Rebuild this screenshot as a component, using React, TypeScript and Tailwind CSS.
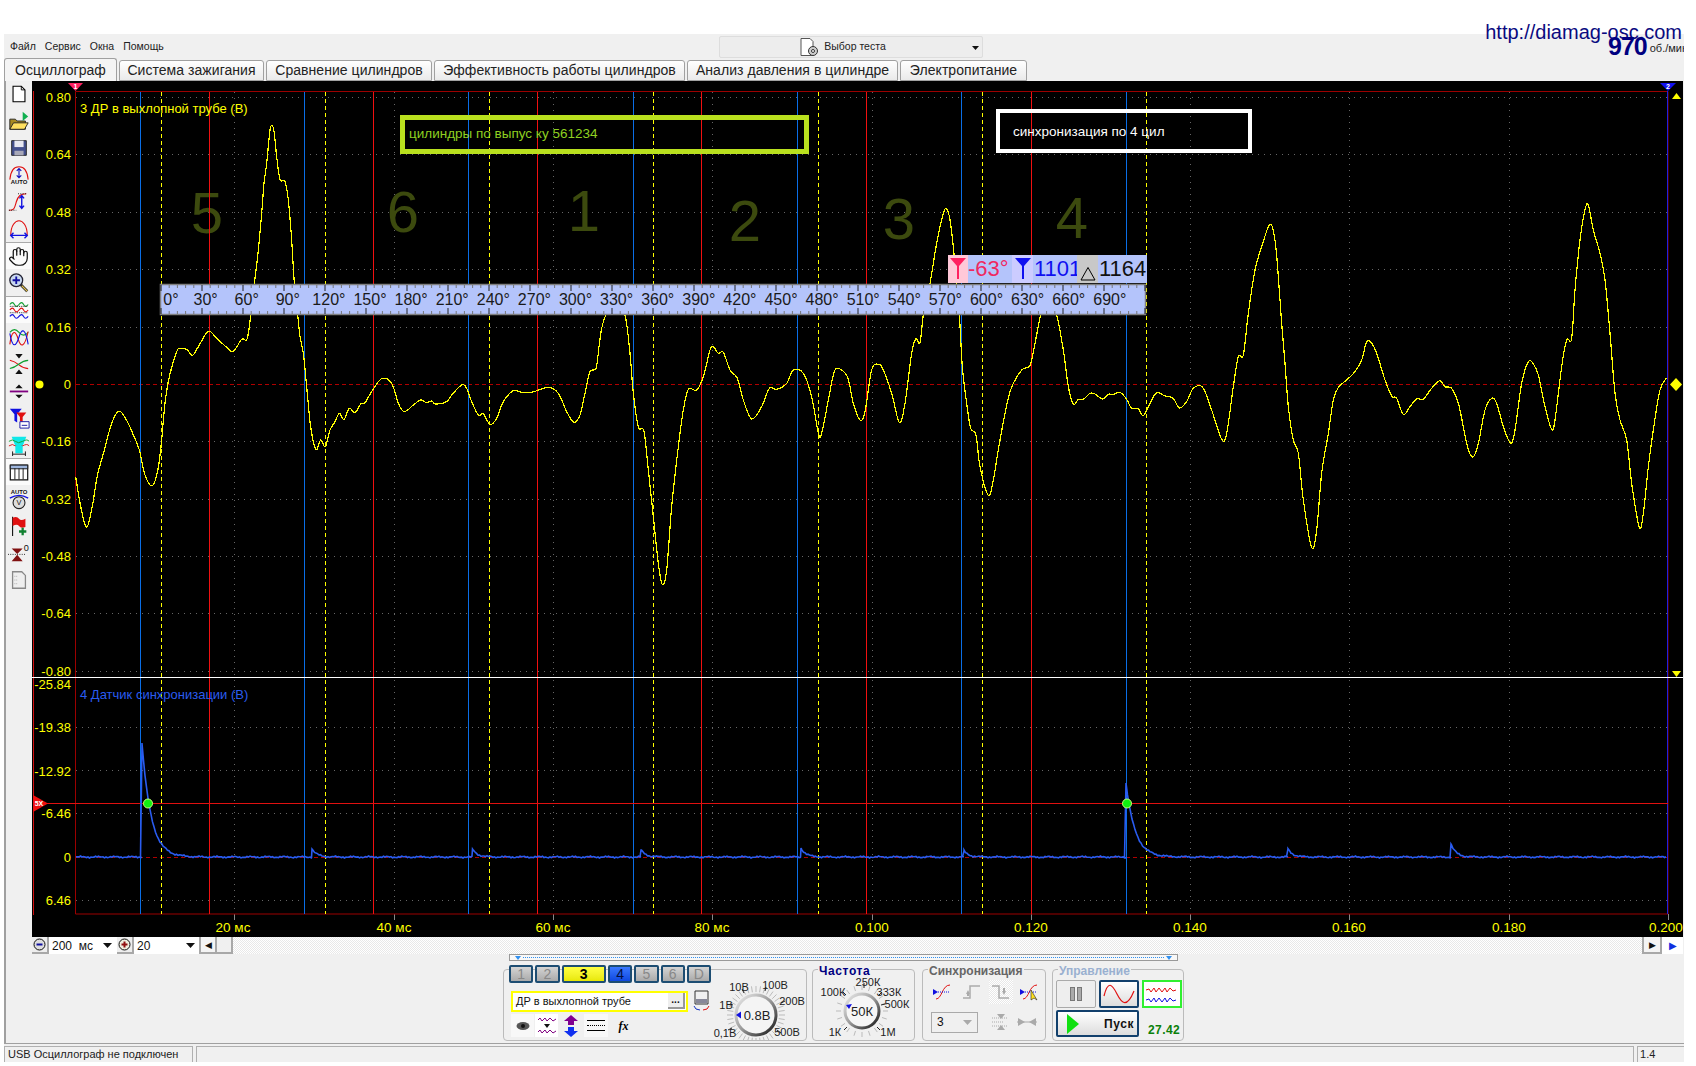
import React from "react";
import { Hand } from "lucide-react";

type Pt = [number, number];

// traced from the reference, each block in its own crop coordinates (3x)
const zoomed = (ox: number, oy: number, pts: Pt[]): Pt[] =>
  pts.map(([x, y]) => [ox + x / 3, oy + y / 3] as Pt);

const yellowTrace: Pt[] = [
  [75.7, 477], [81, 508], [86.5, 527], [92, 508], [97.3, 476],
  ...zoomed(70, 110, [
    [103, 1020], [125, 940], [147, 903], [172, 935], [190, 975], [208, 1020],
  ]),
  [145, 475], [152, 486], [157, 474],
  ...zoomed(70, 110, [
    [272, 1020], [285, 880], [298, 800], [320, 725], [330, 716], [350, 718], [367, 736], [385, 710], [415, 664],
    [440, 685], [470, 712], [490, 724], [515, 688], [530, 690], [538, 650], [542, 614], [553, 522], [565, 420],
    [575, 310], [582, 220], [590, 160], [600, 60], [607, 48], [613, 70], [620, 140], [630, 208], [645, 215],
    [655, 270], [665, 390], [673, 520], [683, 614], [690, 680], [700, 730], [710, 830], [722, 950], [738, 1018],
    [752, 990], [766, 1010], [780, 960], [795, 935], [808, 910], [822, 928], [838, 895], [855, 908], [872, 882],
    [885, 878], [905, 845], [935, 806], [965, 820], [985, 880], [1003, 905], [1030, 885], [1052, 870], [1070, 878],
    [1085, 873], [1097, 882], [1130, 875], [1145, 855], [1175, 825], [1190, 835], [1205, 875], [1225, 915], [1240, 912],
  ]),
  ...zoomed(490, 230, [
    [0, 583], [20, 565], [40, 515], [70, 482], [95, 487], [125, 487], [175, 472], [205, 490], [230, 545], [252, 577],
    [270, 555], [285, 490], [300, 425], [318, 415], [327, 350], [335, 295], [347, 255], [375, 190], [405, 255], [420, 370],
    [430, 490], [445, 590], [462, 605], [475, 720], [490, 860], [505, 1000], [517, 1063], [530, 1020], [545, 830], [565, 650],
    [580, 540], [595, 478], [620, 480], [640, 440], [660, 360], [670, 350], [685, 370], [700, 367], [720, 420], [742, 445],
    [760, 510], [785, 567], [815, 530], [838, 475], [860, 478], [890, 460], [910, 420], [940, 430], [965, 500], [985, 610],
    [995, 610], [1015, 510], [1030, 435], [1043, 415], [1072, 440], [1090, 520], [1110, 570], [1125, 545], [1145, 420],
    [1165, 403], [1180, 420], [1205, 490], [1228, 577],
  ]),
  ...zoomed(900, 190, [
    [15, 640], [35, 490], [47, 447], [60, 457], [70, 375], [90, 280], [110, 160], [130, 70], [140, 58], [150, 90],
    [165, 220], [178, 375], [187, 530], [200, 640], [212, 715], [228, 735], [240, 830], [265, 916], [280, 870], [300, 750],
    [330, 605], [365, 540], [390, 527], [405, 460], [422, 375], [445, 300], [470, 375], [490, 480], [505, 590], [520, 642],
    [535, 628], [550, 628], [570, 610], [585, 612], [608, 627], [625, 613], [640, 613], [660, 607], [680, 628], [695, 655],
    [715, 657], [730, 677], [750, 640], [770, 608], [795, 618], [820, 625], [838, 654], [860, 635], [880, 595], [908, 592],
    [935, 660], [965, 748], [980, 730], [1000, 590], [1015, 500], [1030, 495], [1045, 370], [1065, 240], [1085, 170], [1110, 103],
  ]),
  ...zoomed(1270, 190, [
    [15, 150], [25, 260], [35, 400], [45, 520], [55, 650], [70, 750], [85, 790], [100, 930], [125, 1072], [140, 1020],
    [155, 850], [175, 730], [190, 630], [205, 592], [230, 570], [255, 545], [275, 510], [290, 455], [305, 460], [320, 490],
    [345, 570], [365, 618], [380, 625], [400, 673], [420, 650], [440, 627], [460, 627], [485, 595], [510, 572], [525, 590],
    [545, 595], [565, 640], [580, 710], [595, 780], [610, 800], [625, 760], [645, 660], [665, 625], [680, 640], [700, 710],
    [722, 760], [735, 720], [755, 580], [775, 515], [790, 522], [805, 555], [825, 650], [845, 718], [855, 690], [875, 530],
    [890, 450], [905, 445], [915, 300], [930, 150], [945, 60], [955, 45], [970, 120], [990, 190], [1005, 270], [1020, 430],
    [1035, 610], [1050, 690], [1070, 750], [1085, 880], [1108, 1012], [1120, 970], [1135, 830], [1150, 720], [1170, 600], [1190, 563],
  ]),
];

const smooth = (pts: Pt[]) => {
  let d = `M${pts[0][0]} ${pts[0][1]}`;
  for (let i = 0; i < pts.length - 1; i++) {
    const p0 = pts[Math.max(i - 1, 0)];
    const p1 = pts[i];
    const p2 = pts[i + 1];
    const p3 = pts[Math.min(i + 2, pts.length - 1)];
    d += `C${p1[0] + (p2[0] - p0[0]) / 6} ${p1[1] + (p2[1] - p0[1]) / 6} ${p2[0] - (p3[0] - p1[0]) / 6} ${p2[1] - (p3[1] - p1[1]) / 6} ${p2[0]} ${p2[1]}`;
  }
  return d;
};

// sync channel: flat line with a pulse at each spark
const pulses: [number, number][] = [
  [142, 114], [312, 8], [472.5, 8], [641, 7], [801, 9], [964, 6], [1126, 74], [1288, 8], [1451, 13],
];
const blueTrace = () => {
  const pts: Pt[] = [];
  for (let x = 76; x < 1667; x += 1.5) {
    const noise = Math.sin(x * 1.7) * 0.5 + Math.sin(x * 0.37) * 0.5;
    let lift = 0;
    for (const [px, h] of pulses) {
      if (x >= px) {
        const dx = x - px;
        lift = Math.max(lift, h * Math.exp(-dx / (h > 50 ? 9 : 5)));
      }
    }
    const before = pulses.find(([px]) => x < px && x + 1.5 >= px);
    if (before) pts.push([before[0], 857 + noise]);
    pts.push([x, 857 + noise - lift]);
    if (before) {
      pts.push([before[0], 857 - before[1]]);
    }
  }
  return "M" + pts.map((p) => `${p[0].toFixed(1)} ${p[1].toFixed(1)}`).join("L");
};

const blues = [140, 304, 468, 633, 797, 961, 1126];
const dashes = [161, 325, 489, 653, 818, 982, 1146];
const reds = [209, 373, 537, 701, 866, 1031];
const gridX = [234, 394, 553, 712, 872, 1031, 1190, 1349, 1509];
const gridY = [97, 154, 212, 269, 327, 441, 499, 556, 613, 671, 727, 770, 813, 900];
const yLabels: [string, number][] = [
  ["0.80", 97], ["0.64", 154], ["0.48", 212], ["0.32", 269], ["0.16", 327], ["0", 384], ["-0.16", 441], ["-0.32", 499],
  ["-0.48", 556], ["-0.64", 613], ["-0.80", 671], ["-25.84", 684], ["-19.38", 727], ["-12.92", 771], ["-6.46", 813],
  ["0", 857], ["6.46", 900],
];
const xLabels: [string, number][] = [
  ["20 мс", 233], ["40 мс", 394], ["60 мс", 553], ["80 мс", 712], ["0.100", 872], ["0.120", 1031], ["0.140", 1190],
  ["0.160", 1349], ["0.180", 1509], ["0.200", 1666],
];
const digits: [string, number, number][] = [
  ["5", 207, 233], ["6", 403, 232], ["1", 584, 231], ["2", 745, 241], ["3", 899, 239], ["4", 1072, 238],
];

const Chart = () => {
  const deg: number[] = [];
  for (let i = 0; i < 24; i++) deg.push(i * 30);
  const minor: number[] = [];
  for (let x = 161; x < 1146; x += 8.2) minor.push(x);
  return (
    <svg width={1651} height={856} viewBox="32 81 1651 856" className="block">
      <rect x={32} y={81} width={1651} height={856} fill="#000" />
      {gridY.map((y) => (
        <line key={y} x1={76} x2={1668} y1={y + 0.5} y2={y + 0.5} stroke="#666" strokeDasharray="1 5" />
      ))}
      {gridX.map((x) => (
        <g key={x}>
          <line x1={x + 0.5} x2={x + 0.5} y1={92} y2={914} stroke="#666" strokeDasharray="1 5" />
          <line x1={x + 0.5} x2={x + 0.5} y1={914} y2={920} stroke="#888" />
        </g>
      ))}
      <line x1={1668.5} x2={1668.5} y1={914} y2={920} stroke="#888" />
      {[384, 857].map((y) => (
        <line key={y} x1={76} x2={1668} y1={y + 0.5} y2={y + 0.5} stroke="#b00000" strokeDasharray="4 3" />
      ))}
      {digits.map(([t, x, y]) => (
        <text key={t} x={x} y={y} fontSize={58} textAnchor="middle" fill="#3c4a0e">
          {t}
        </text>
      ))}
      <path d="M75.5 914V91.5H1668V914H75.5Z" fill="none" stroke="#9c0000" />
      <line x1={33.5} x2={33.5} y1={91} y2={915} stroke="#d01010" />
      <line x1={1667.5} x2={1667.5} y1={91} y2={914} stroke="#2020e0" />
      {blues.map((x) => (
        <line key={x} x1={x + 0.5} x2={x + 0.5} y1={92} y2={914} stroke="#0a6ee6" />
      ))}
      {reds.map((x) => (
        <line key={x} x1={x + 0.5} x2={x + 0.5} y1={92} y2={914} stroke="#f01010" />
      ))}
      {dashes.map((x) => (
        <line key={x} x1={x + 0.5} x2={x + 0.5} y1={92} y2={914} stroke="#ffff00" strokeDasharray="4 3" />
      ))}
      <line x1={33} x2={1668} y1={803.5} y2={803.5} stroke="#e01010" />
      <path d={smooth(yellowTrace)} fill="none" stroke="#ffff00" strokeWidth={1.2} shapeRendering="crispEdges" />
      <path d={blueTrace()} fill="none" stroke="#2a5cf0" strokeWidth={1.6} />
      <line x1={32} x2={1683} y1={677.5} y2={677.5} stroke="#fff" />
      {yLabels.map(([t, y]) => (
        <text key={t + y} x={71} y={y + 5} fontSize={13} textAnchor="end" fill="#ffff00">
          {t}
        </text>
      ))}
      {xLabels.map(([t, x]) => (
        <text key={t} x={x} y={932} fontSize={13.5} textAnchor="middle" fill="#ffff00">
          {t}
        </text>
      ))}
      <text x={80} y={113} fontSize={13} fill="#ffff00">
        3 ДР в выхлопной трубе (В)
      </text>
      <text x={80} y={699} fontSize={13} fill="#2a5cf0">
        4 Датчик синхронизации (В)
      </text>
      <circle cx={39.5} cy={384.5} r={4} fill="#ffff00" />
      <path d="M1676 378l6 6.5-6 6.5-6-6.5z" fill="#ffff00" />
      <path d="M1672 99l4.500-6 4.500 6z" fill="#ffff00" />
      <path d="M1672 671l4.500 6 4.500-6z" fill="#ffff00" />
      <path d="M68 83h15l-7.500 8z" fill="#ff2060" />
      <text x={75.5} y={89} fontSize={7} fontWeight={700} textAnchor="middle" fill="#fff">
        1
      </text>
      <path d="M1660 83h16l-8 8z" fill="#1010f0" />
      <text x={1668} y={89} fontSize={7} fontWeight={700} textAnchor="middle" fill="#fff">
        2
      </text>
      <path d="M33 795l15 8.500-15 8.500z" fill="#f01010" />
      <text x={39} y={806} fontSize={7} fontWeight={700} textAnchor="middle" fill="#fff">
        5X
      </text>
      <circle cx={148} cy={803.500} r={4.500} fill="#10f010" stroke="#c8ff80" />
      <circle cx={1127} cy={803.500} r={4.500} fill="#10f010" stroke="#c8ff80" />

      {/* degree ruler */}
      <rect x={160.500} y={284.500} width={985} height={30} fill="#b4c4fb" stroke="#808080" strokeWidth={1.500} />
      {minor.map((x, i) => (
        <g key={x} stroke={i % 5 === 0 ? "#222" : "#777"}>
          <line x1={x} x2={x} y1={285} y2={i % 5 === 0 ? 291 : 288} />
          <line x1={x} x2={x} y1={i % 5 === 0 ? 308 : 311} y2={314} />
        </g>
      ))}
      {deg.map((d, i) => (
        <text key={d} x={i === 0 ? 171 : 164.5 + i * 41.1} y={305} fontSize={16} textAnchor="middle" fill="#1a1a1a">
          {d}°
        </text>
      ))}
    </svg>
  );
};

const Funnel = ({ color }: { color: string }) => (
  <svg width={18} height={26} viewBox="0 0 18 26">
    <path d="M1 2h16l-7 8v13H8V10z" fill={color} />
  </svg>
);

const Readout = () => (
  <div className="absolute left-[916px] top-[174px] flex h-[28px] w-[199px] items-center overflow-hidden whitespace-nowrap bg-[#b4c4fb] text-[22px] leading-[28px]">
    <div className="flex h-full w-[20px] items-center justify-center bg-[#ffc8d8]">
      <Funnel color="#ff2060" />
    </div>
    <div className="w-[44px] text-[#f02860]">-63°</div>
    <div className="flex h-full w-[21px] items-center justify-center bg-[#ccccff]">
      <Funnel color="#1010f0" />
    </div>
    <div className="w-[44px] overflow-hidden pl-[1px] text-[#1010f0]">1101</div>
    <div className="flex h-full w-[21px] items-end justify-center bg-[#c8c8c8] pb-[2px]">
      <svg width={16} height={15} viewBox="0 0 16 15">
        <path d="M8 1.500L1 14h14z" fill="none" stroke="#000" />
      </svg>
    </div>
    <div className="ml-[1px] text-[#111]">1164</div>
  </div>
);

const Icon = ({ children, size = 22 }: { children: React.ReactNode; size?: number }) => (
  <svg width={size} height={size} viewBox="0 0 24 24" fill="none">
    {children}
  </svg>
);

const Auto = ({ y }: { y: number }) => (
  <text x={12} y={y} fontSize={6.500} fontWeight={700} textAnchor="middle" fill="#111">
    AUTO
  </text>
);

const toolbar: { icon: React.ReactNode; on?: boolean }[] = [
  {
    icon: (
      <Icon>
        <path d="M5.500 3.500h9l4 4v13h-13z" fill="#fff" stroke="#000" strokeWidth={1.200} />
        <path d="M14.500 3.500v4h4" stroke="#000" />
      </Icon>
    ),
  },
  {
    icon: (
      <Icon>
        <path d="M2 21V10h6l2 2h9v9z" fill="#a88a20" stroke="#222" />
        <path d="M2 21l4-7h16l-4 7z" fill="#ffe060" stroke="#222" />
        <path d="M16 2l6 5-6 5z" fill="#10b050" />
      </Icon>
    ),
  },
  {
    icon: (
      <Icon>
        <path d="M4 4h16v16H4z" fill="#44508c" stroke="#222" />
        <path d="M7 4h10v7H7z" fill="#e8e8f0" />
        <path d="M7 15h10v5H7z" fill="#a8a8b8" />
      </Icon>
    ),
  },
  {
    icon: (
      <Icon>
        <path d="M2 17C3 6 8 3 12 3s9 3 10 14" stroke="#e01010" strokeWidth={1.200} />
        <path d="M12 5v10M9.500 7.500L12 5l2.500 2.500M9.500 12.500L12 15l2.500-2.500" stroke="#1010c0" strokeWidth={1.200} />
        <Auto y={22} />
      </Icon>
    ),
  },
  {
    icon: (
      <Icon>
        <path d="M1 21c6 0 6-2 8-9s5-9 11-9" stroke="#e01010" strokeWidth={1.200} />
        <path d="M1 21h8M11 3h10" stroke="#111" strokeDasharray="1 1.500" />
        <path d="M15 5v14M12.500 8L15 5l2.500 3M12.500 16l2.500 3 2.500-3" stroke="#1010e0" strokeWidth={1.500} />
      </Icon>
    ),
  },
  {
    icon: (
      <Icon>
        <path d="M3 19C3 8 8 3 12 3s9 5 9 16" stroke="#e01010" strokeWidth={1.200} />
        <path d="M3 19h18M6 16l-3 3 3 3M18 16l3 3-3 3" stroke="#1010e0" strokeWidth={1.500} />
      </Icon>
    ),
  },
  { icon: <Hand size={21} strokeWidth={1.400} color="#111" />, on: true },
  {
    icon: (
      <Icon>
        <path d="M14 14l7 7" stroke="#222" strokeWidth={3} />
        <path d="M15 15l6 6" stroke="#e0c050" strokeWidth={1.200} />
        <circle cx={9} cy={9} r={7} fill="#c8d8f0" stroke="#223" strokeWidth={1.400} />
        <path d="M9 5v8M5 9h8" stroke="#1010a0" strokeWidth={2} />
      </Icon>
    ),
  },
  {
    icon: (
      <Icon>
        <path d="M2 6q3-4 5 0t5 0 5 0 5 0" stroke="#10a030" strokeWidth={1.200} />
        <path d="M2 8h20M2 15h20" stroke="#111" strokeDasharray="1 1" />
        <path d="M2 12q3-4 5 0t5 0 5 0 5 0" stroke="#e01010" strokeWidth={1.200} />
        <path d="M2 19q3-4 5 0t5 0 5 0 5 0" stroke="#1010e0" strokeWidth={1.200} />
      </Icon>
    ),
    on: true,
  },
  {
    icon: (
      <Icon>
        <path d="M2 7q5-6 10 0t10 0" stroke="#10a030" strokeWidth={1.200} />
        <path d="M2 20C4 4 8 4 11 14s7 10 11-8" stroke="#e01010" strokeWidth={1.200} />
        <path d="M2 8c3 18 7 14 10 4s7-10 10 8" stroke="#1010e0" strokeWidth={1.200} />
      </Icon>
    ),
  },
  {
    icon: (
      <Icon>
        <path d="M2 8q5 1 10 5t10 4" stroke="#e01010" strokeWidth={1.200} />
        <path d="M2 17q5-1 10-5t10-4" stroke="#10a030" strokeWidth={1.200} />
        <path d="M8 1h8l-4 5zM8 23h8l-4-5z" fill="#111" />
      </Icon>
    ),
  },
  {
    icon: (
      <Icon>
        <path d="M2 12.500h20" stroke="#800080" strokeWidth={2} />
        <path d="M8 9l4-4 4 4zM8 16l4 4 4-4z" fill="#111" />
      </Icon>
    ),
  },
  {
    icon: (
      <Icon>
        <path d="M2 2h13l-5 6v9l-3-2V8z" fill="#1010e0" />
        <path d="M9 6h11l-4 5v6l-3-2v-4z" fill="#e01010" />
        <path d="M13 16h10v7H13z" fill="#fff" stroke="#1010a0" />
        <path d="M15 20h6" stroke="#1010a0" />
      </Icon>
    ),
  },
  {
    icon: (
      <Icon>
        <path d="M4 3h16l-4 10H8z" fill="#10e8e8" />
        <path d="M1 8q4-3 7 0t8 0 7 0" stroke="#10a030" />
        <path d="M1 13q4-3 7 0t8 0 7 0" stroke="#e01010" />
        <path d="M8 13h8v8H8z" fill="#10e8e8" />
        <path d="M5 22h14M5 19v5M19 19v5" stroke="#111" />
      </Icon>
    ),
  },
  {
    icon: (
      <Icon>
        <path d="M2.500 4.500h19v16h-19z" fill="#fff" stroke="#111" strokeWidth={1.300} />
        <path d="M2.500 4.500h19v4h-19z" fill="#9cb4dc" stroke="#111" />
        <path d="M7.500 8v12M12 8v12M16.500 8v12" stroke="#111" />
      </Icon>
    ),
    on: true,
  },
  {
    icon: (
      <Icon>
        <Auto y={6} />
        <path d="M2 11q10-6 20 0" stroke="#1010e0" strokeWidth={1.400} />
        <circle cx={12} cy={16} r={6.500} fill="#ddd" stroke="#222" strokeWidth={1.200} />
        <text x={12} y={19} fontSize={8} textAnchor="middle" fill="#111">
          V
        </text>
      </Icon>
    ),
  },
  {
    icon: (
      <Icon>
        <path d="M5 2v21" stroke="#111" strokeWidth={1.200} />
        <path d="M5 3q5-2 7 1t7 0v9q-5 2-7-1t-7 0z" fill="#e01010" />
        <path d="M16 14v8M12 18h8" stroke="#108030" strokeWidth={2.500} />
      </Icon>
    ),
  },
  {
    icon: (
      <Icon>
        <path d="M4 7h12l-6 6zM4 21h12l-6-7z" fill="#801010" />
        <path d="M0 13.500h20" stroke="#111" strokeDasharray="1 1.500" />
        <text x={20} y={10} fontSize={10} textAnchor="middle" fill="#111">
          0
        </text>
      </Icon>
    ),
  },
  {
    icon: (
      <Icon>
        <path d="M5 3h10l4 4v14H5z" fill="#eee" stroke="#888" strokeWidth={1.400} />
        <path d="M7 8h3M7 12h3M7 16h3" stroke="#aaa" strokeDasharray="1 1" />
      </Icon>
    ),
  },
];

const Toolbar = () => (
  <div className="-mt-[1px] flex w-[26px] shrink-0 flex-col pr-[1px]">
    {toolbar.map((b, i) => (
      <div
        key={i}
        className={
          b.on
            ? "flex h-[27px] items-center justify-center border-t border-[#aaa] bg-[#fbfbfb]"
            : "flex h-[27px] items-center justify-center"
        }
      >
        {b.icon}
      </div>
    ))}
  </div>
);

const Caret = () => (
  <svg width={9} height={5} viewBox="0 0 9 5">
    <path d="M0 0h9L4.500 5z" fill="#111" />
  </svg>
);

const ScaleBtn = ({ plus }: { plus?: boolean }) => (
  <div className="flex h-[17px] w-[17px] shrink-0 items-center justify-center border-r-2 border-b-2 border-[#a8a8a8] bg-[#eee]">
    <svg width={13} height={13} viewBox="0 0 13 13">
      <circle cx={6.500} cy={6.500} r={5.500} fill={plus ? "#eed" : "#ddd"} stroke="#111" />
      <path d={plus ? "M3.500 6.500h6M6.500 3.500v6" : "M3.500 6.500h6"} stroke={plus ? "#901010" : "#1010a0"} strokeWidth={2} />
    </svg>
  </div>
);

const ScrollRow = () => (
  <div className="ml-[26px] flex h-[17px] w-[1651px] items-stretch whitespace-nowrap text-[12px] leading-[16px] text-[#111]">
    <ScaleBtn />
    <div className="flex w-[68px] items-center justify-between bg-white pr-[5px] pl-[3px]">
      <span>200 &nbsp;мс</span>
      <Caret />
    </div>
    <ScaleBtn plus />
    <div className="flex w-[65px] items-center justify-between bg-white pr-[4px] pl-[3px]">
      <span>20</span>
      <Caret />
    </div>
    <div className="flex w-[18px] items-center justify-center border-2 border-t-0 border-[#a8a8a8] bg-[#f4f4f4] text-[9px] text-[#111]">
      ◀
    </div>
    <div className="w-[16px] border-r-2 border-b-2 border-[#a8a8a8] bg-[#f0f0f0]" />
    <div className="flex-1 bg-[repeating-conic-gradient(#fff_0_25%,#e8e8e8_0_50%)] bg-[length:2px_2px]" />
    <div className="flex w-[20px] items-center justify-center border-2 border-t-0 border-[#a8a8a8] bg-[#f4f4f4] text-[9px] text-[#111]">
      ▶
    </div>
    <div className="flex w-[21px] items-center justify-center bg-white text-[10px] text-[#1030e0]">▶</div>
  </div>
);

const ChannelBtn = ({ label, kind }: { label: string; kind?: "yellow" | "blue" }) => {
  if (kind === "yellow")
    return (
      <div className="flex h-[18px] w-[46px] items-center justify-center rounded-[2px] border-2 border-[#1d4d72] bg-gradient-to-b from-[#ffff40] to-[#e8e800] text-[14px] font-bold text-black">
        {label}
      </div>
    );
  if (kind === "blue")
    return (
      <div className="flex h-[18px] w-[25px] items-center justify-center rounded-[2px] border-2 border-[#1d4d72] bg-gradient-to-b from-[#3a78ff] to-[#1048e0] text-[14px] text-[#041040]">
        {label}
      </div>
    );
  return (
    <div className="flex h-[18px] w-[25px] items-center justify-center rounded-[2px] border-2 border-[#1d4d72] bg-gradient-to-b from-[#d4d4d4] to-[#aaa] text-[14px] text-[#888]">
      {label}
    </div>
  );
};

const Ticks = ({ cx, cy, r1, r2, step = 12 }: { cx: number; cy: number; r1: number; r2: number; step?: number }) => {
  const out: React.ReactNode[] = [];
  for (let a = 0; a < 360; a += step) {
    const t = (a * Math.PI) / 180;
    out.push(
      <line
        key={a}
        x1={cx + Math.cos(t) * r1}
        y1={cy + Math.sin(t) * r1}
        x2={cx + Math.cos(t) * r2}
        y2={cy + Math.sin(t) * r2}
        stroke="#bbb"
      />,
    );
  }
  return <>{out}</>;
};

const knobLabel = (t: string, x: number, y: number) => (
  <text key={t} x={x} y={y + 4} fontSize={11} textAnchor="middle" fill="#222">
    {t}
  </text>
);

const VoltKnob = () => (
  <svg width={94} height={70} viewBox="712 970 94 70" className="shrink-0">
    <defs>
      <linearGradient id="ring" x1="0" y1="0" x2="1" y2="1">
        <stop offset="0" stopColor="#eee" />
        <stop offset="0.5" stopColor="#999" />
        <stop offset="1" stopColor="#111" />
      </linearGradient>
    </defs>
    <Ticks cx={757} cy={1015} r1={23} r2={29} step={9} />
    <circle cx={757} cy={1015} r={20} fill="#f4f4f4" stroke="url(#ring)" strokeWidth={3} />
    <path d="M737 1015l5-3.500v7z" fill="#1010e0" />
    <text x={758} y={1020} fontSize={13} textAnchor="middle" fill="#222">
      0.8В
    </text>
    <path d="M734 1005l-3-1M745 993l-2-4M766 991l1-4M782 1003l4-2M778 1030l4 3M733 1028l-4 2" stroke="#222" />
    {knobLabel("10В", 740, 987)}
    {knobLabel("100В", 776, 985)}
    {knobLabel("1В", 727, 1005)}
    {knobLabel("200В", 793, 1001)}
    {knobLabel("0,1В", 726, 1033)}
    {knobLabel("500В", 788, 1032)}
  </svg>
);

const FreqKnob = () => (
  <svg width={101} height={70} viewBox="813 970 101 70" className="block">
    <Ticks cx={862} cy={1011} r1={21} r2={26} step={18} />
    <circle cx={862} cy={1011} r={17} fill="#f6f6f6" stroke="url(#ring)" strokeWidth={3} />
    <path d="M846 1005l6-1-3 5z" fill="#1010e0" />
    <text x={862} y={1016} fontSize={13} textAnchor="middle" fill="#222">
      50К
    </text>
    <path d="M846 995l-3-3M864 988v-5M879 995l3-3M881 1005l4-1M847 1027l-3 3M877 1027l3 3" stroke="#222" />
    {knobLabel("100К", 833, 992)}
    {knobLabel("250К", 868, 982)}
    {knobLabel("333К", 889, 992)}
    {knobLabel("500К", 897, 1004)}
    {knobLabel("1К", 835, 1032)}
    {knobLabel("1М", 888, 1032)}
  </svg>
);

const ChannelPanel = () => (
  <div className="relative flex h-[72px] w-[304px] shrink-0 justify-between rounded-[4px] border border-[#bbb] pr-[1px] pl-[7px]">
    <div className="flex w-[200px] shrink-0 flex-col">
      <div className="-mt-[5px] -ml-[2px] flex gap-[2px]">
        <ChannelBtn label="1" />
        <ChannelBtn label="2" />
        <ChannelBtn label="3" kind="yellow" />
        <ChannelBtn label="4" kind="blue" />
        <ChannelBtn label="5" />
        <ChannelBtn label="6" />
        <ChannelBtn label="D" />
      </div>
      <div className="mt-[7px] flex items-center gap-[4px]">
        <div className="flex h-[21px] w-[177px] shrink-0 items-center justify-between border-2 border-[#ffff00] bg-white pr-[1px] pl-[3px] text-[11px] text-[#111]">
          <span>ДР в выхлопной трубе</span>
          <span className="flex h-[16px] w-[17px] items-center justify-center border-r-2 border-b-2 border-[#999] bg-[#eee] text-[10px] leading-[8px] font-bold">
            ...
          </span>
        </div>
        <svg width={19} height={22} viewBox="0 0 19 22" className="shrink-0">
          <path d="M3 1h13v13H3z" fill="#f0f0f0" stroke="#333" />
          <path d="M4 9h11v4H4z" fill="#889" />
          <path d="M2 16q1 4 6 4" stroke="#1030c0" fill="none" />
          <path d="M17 16q-1 4-6 4" stroke="#e01010" fill="none" />
        </svg>
      </div>
      <div className="mt-[2px] flex h-[23px] items-center gap-[1px]">
        <div className="flex h-[23px] w-[23px] items-center justify-center bg-[#f8f8f8]">
          <svg width={14} height={10} viewBox="0 0 14 10">
            <ellipse cx={7} cy={5} rx={6.500} ry={4} fill="#555" />
            <circle cx={7} cy={5} r={2} fill="#111" />
          </svg>
        </div>
        <div className="flex h-[23px] w-[23px] items-center justify-center bg-white">
          <svg width={20} height={20} viewBox="0 0 20 20">
            <path d="M1 4l2-2 2 3 3-3 2 3 3-3 3 3 3-2" stroke="#800080" fill="none" />
            <path d="M1 16l2-2 2 3 3-3 2 3 3-3 3 3 3-2" stroke="#800080" fill="none" />
            <path d="M7 8h6l-3 4z" fill="#111" />
          </svg>
        </div>
        <div className="flex h-[23px] w-[24px] items-center justify-center">
          <svg width={16} height={22} viewBox="0 0 16 22">
            <path d="M8 0l7 6h-4v4H5V6H1z" fill="#800090" />
            <path d="M8 22l7-6h-4v-4H5v4H1z" fill="#1030f0" />
          </svg>
        </div>
        <div className="flex h-[23px] w-[24px] flex-col items-center justify-center gap-[4px] bg-[#f8f8f8]">
          <div className="h-[1px] w-[18px] bg-black" />
          <div className="w-[18px] border-t border-dotted border-black" />
          <div className="h-[1px] w-[18px] bg-black" />
        </div>
        <div className="ml-[3px] w-[23px] text-center font-['Liberation_Serif',serif] text-[12px] font-bold text-black italic">
          fx
        </div>
      </div>
    </div>
    <VoltKnob />
  </div>
);

const Legend = ({ text, className }: { text: string; className: string }) => (
  <div className={"absolute -top-[6px] left-[5px] bg-[#f0f0f0] px-[1px] text-[12px] leading-[14px] font-bold " + className}>
    {text}
  </div>
);

const SyncIcon = ({ children, bg }: { children: React.ReactNode; bg?: boolean }) => (
  <div
    className={
      bg
        ? "flex h-[24px] w-[24px] items-center justify-center bg-[repeating-conic-gradient(#fff_0_25%,#e8e8e8_0_50%)] bg-[length:2px_2px]"
        : "flex h-[24px] w-[24px] items-center justify-center"
    }
  >
    <svg width={20} height={18} viewBox="0 0 20 18" fill="none">
      {children}
    </svg>
  </div>
);

const SyncPanel = () => (
  <div className="relative ml-[2px] flex h-[72px] w-[124px] shrink-0 flex-col rounded-[4px] border border-[#bbb] pt-[10px] pl-[8px]">
    <Legend text="Синхронизация" className="text-[#666]" />
    <div className="flex gap-[5px]">
      <SyncIcon>
        <path d="M3 16C9 16 9 2 17 2" stroke="#e01010" />
        <path d="M0 6l5 3-5 3z" fill="#1010e0" />
        <path d="M5 9h12" stroke="#1010e0" strokeDasharray="1 1" />
      </SyncIcon>
      <SyncIcon>
        <path d="M1 15h7V3h10" stroke="#aaa" strokeWidth={1.500} />
        <path d="M4 11l2-4 2 4zM5 11h2v2H5z" fill="#aaa" />
      </SyncIcon>
      <SyncIcon bg>
        <path d="M1 3h7v12h10" stroke="#aaa" strokeWidth={1.500} />
        <path d="M11 8l2 4 2-4zM12 5h2v3h-2z" fill="#aaa" />
      </SyncIcon>
      <SyncIcon>
        <path d="M3 16C9 16 9 2 17 2" stroke="#e01010" />
        <path d="M0 6l5 3-5 3z" fill="#1010e0" />
        <path d="M5 9h12" stroke="#1010e0" strokeDasharray="1 1" />
        <path d="M11 7v10l3-2 3 2z" fill="#ffe020" stroke="#222" strokeWidth={0.600} />
      </SyncIcon>
    </div>
    <div className="mt-[6px] flex items-center">
      <div className="flex h-[21px] w-[47px] items-center justify-between border border-[#aaa] px-[5px] text-[12px] text-[#111]">
        <span>3</span>
        <svg width={9} height={5} viewBox="0 0 9 5">
          <path d="M0 0h9L4.500 5z" fill="#aaa" />
        </svg>
      </div>
      <div className="ml-[10px]">
        <SyncIcon>
          <path d="M2 5h16M2 9h12M2 13h16" stroke="#aaa" strokeDasharray="1 1" />
          <path d="M7 1h8l-4 5zM7 17h8l-4-5z" fill="#aaa" />
        </SyncIcon>
      </div>
      <div className="ml-[3px]">
        <SyncIcon>
          <path d="M1 5l7 4-7 4zM19 5l-7 4 7 4z" fill="#aaa" />
          <path d="M0 9h20" stroke="#aaa" />
        </SyncIcon>
      </div>
    </div>
  </div>
);

const ControlPanel = () => (
  <div className="relative ml-[1px] flex h-[72px] w-[132px] shrink-0 flex-col gap-[2px] rounded-[4px] border border-[#bbb] pt-[10px] pl-[3px]">
    <Legend text="Управление" className="text-[#9ab0d0]" />
    <div className="flex gap-[3px]">
      <div className="flex h-[28px] w-[40px] items-center justify-center gap-[2px] rounded-[2px] border border-[#aaa] bg-[#eee]">
        <div className="h-[14px] w-[5px] border border-[#777] bg-[#aaa]" />
        <div className="h-[14px] w-[5px] border border-[#777] bg-[#aaa]" />
      </div>
      <div className="flex h-[28px] w-[40px] items-center justify-center rounded-[2px] border-2 border-[#12406c] bg-gradient-to-b from-white to-[#ddd]">
        <svg width={32} height={20} viewBox="0 0 32 20" fill="none">
          <path d="M1 12C5 -4 9 0 14 10s10 14 17-3" stroke="#e01010" strokeWidth={1.200} />
        </svg>
      </div>
      <div className="flex h-[28px] w-[40px] items-center justify-center border-2 border-[#30f030] bg-white">
        <svg width={34} height={20} viewBox="0 0 34 20" fill="none">
          <path d="M1 6l3-1 2 3 3-4 2 4 3-4 3 4 3-4 2 4 3-4 3 3 3-1" stroke="#e01010" />
          <path d="M1 16l3-1 2 3 3-4 2 4 3-4 3 4 3-4 2 4 3-4 3 3 3-1" stroke="#1010e0" />
        </svg>
      </div>
    </div>
    <div className="flex items-end">
      <div className="flex h-[27px] w-[83px] items-center rounded-[2px] border-2 border-[#12406c] bg-gradient-to-b from-white to-[#ddd] pl-[9px]">
        <svg width={12} height={20} viewBox="0 0 12 20">
          <path d="M0 0l12 10L0 20z" fill="#10e010" />
        </svg>
        <span className="ml-[25px] text-[12px] font-bold tracking-[0.6px] text-[#111]">Пуск</span>
      </div>
      <span className="ml-[9px] text-[12px] leading-[14px] font-bold tracking-[0.4px] text-[#0a800a]">27.42</span>
    </div>
  </div>
);

const tabs: [string, string][] = [
  ["Система зажигания", "w-[145px]"],
  ["Сравнение цилиндров", "w-[166px]"],
  ["Эффективность работы цилиндров", "w-[251px]"],
  ["Анализ давления в цилиндре", "w-[211px]"],
  ["Электропитание", "w-[127px]"],
];

export default function App() {
  return (
    <div className="relative h-[1066px] w-[1696px] overflow-hidden bg-white pt-[34px] pl-[4px] font-['Liberation_Sans',sans-serif]">
      <div className="absolute top-[20px] right-[14px] z-10 text-[20px] leading-[24px] text-[#0a0a80]">http://diamag-osc.com</div>
      <div className="relative h-[1028px] w-[1680px] bg-[#f0f0f0]">
        <div className="absolute top-0 left-[1604px] z-20 flex w-[76px] items-start overflow-hidden whitespace-nowrap">
          <span className="text-[25px] leading-[24px] font-bold tracking-[-1px] text-[#000080]">970</span>
          <span className="mt-[7px] ml-[3px] text-[11px] leading-[14px] text-[#222]">об./мин</span>
        </div>

        {/* menu + test picker */}
        <div className="flex h-[24px] items-center pt-[2px] pl-[6px] text-[10.5px] text-[#222]">
          <div className="flex w-[169px] shrink-0 gap-[9px]">
            <span>Файл</span>
            <span>Сервис</span>
            <span>Окна</span>
            <span>Помощь</span>
          </div>
          <div className="relative -mt-[1px] ml-[540px] flex h-[22px] w-[264px] items-center justify-center gap-[4px] rounded-[2px] border border-[#ddd] bg-[#ededed] pr-[18px]">
            <svg width={22} height={20} viewBox="0 0 22 20" fill="none">
              <path d="M3 1.500h9l3 3v14H3z" fill="#fff" stroke="#555" />
              <circle cx={15} cy={14} r={4.500} fill="#ccc" stroke="#333" />
              <circle cx={15} cy={14} r={1.500} fill="#fff" stroke="#333" />
            </svg>
            <span>Выбор теста</span>
            <div className="absolute top-[9px] right-[3px]">
              <svg width={7} height={4} viewBox="0 0 7 4">
                <path d="M0 0h7L3.500 4z" fill="#111" />
              </svg>
            </div>
          </div>
        </div>

        {/* tabs */}
        <div className="flex h-[23px] items-end gap-[2px] text-[14px] tracking-[0.05px] text-[#222]">
          <div className="flex h-[23px] w-[113px] items-center justify-center rounded-t-[3px] border border-b-0 border-[#a0a0a0] bg-[#f4f4f4]">
            Осциллограф
          </div>
          {tabs.map(([t, w]) => (
            <div
              key={t}
              className={
                "flex h-[21px] items-center justify-center rounded-t-[3px] border border-[#a0a0a0] bg-gradient-to-b from-white to-[#eaeaea] whitespace-nowrap " + w
              }
            >
              {t}
            </div>
          ))}
        </div>

        <div className="h-[962px] border-l-2 border-[#a0a0a0]">
          <div className="flex h-[856px]">
            <Toolbar />
            <div className="relative h-[856px] w-[1651px]">
              <Chart />
              <div className="absolute top-[34px] left-[368px] flex h-[39px] w-[409px] items-center border-[5px] border-[#b9e01e] pl-[4px] text-[13.5px] text-[#8fd020]">
                цилиндры по выпус ку 561234
              </div>
              <div className="absolute top-[28px] left-[964px] flex h-[44px] w-[256px] items-center border-[4px] border-white pt-[3px] pl-[13px] text-[13.5px] text-white">
                синхронизация по 4 цил
              </div>
              <Readout />
            </div>
          </div>
          <ScrollRow />

          {/* bottom controls */}
          <div className="relative h-[88px]">
            <div className="ml-[503px] flex h-[7px] w-[669px] items-center gap-[2px] border border-[#999] bg-[#f8f8f8] px-[5px]">
              <svg width={6} height={4} viewBox="0 0 6 4" className="shrink-0">
                <path d="M0 0h6L3 4z" fill="#3090f0" />
              </svg>
              <div className="h-0 flex-1 border-t border-dotted border-[#3090f0]" />
              <svg width={6} height={4} viewBox="0 0 6 4" className="shrink-0">
                <path d="M0 0h6L3 4z" fill="#3090f0" />
              </svg>
            </div>
            <div className="mt-[8px] ml-[497px] flex gap-[5px]">
              <ChannelPanel />
              <div className="relative h-[72px] w-[103px] shrink-0 rounded-[4px] border border-[#bbb]">
                <Legend text="Частота" className="tracking-[0.6px] text-[#000080]" />
                <FreqKnob />
              </div>
              <SyncPanel />
              <ControlPanel />
            </div>
          </div>
        </div>

        {/* status bar */}
        <div className="flex h-[19px] items-stretch gap-[3px] border-t border-[#a0a0a0] pt-[2px] text-[11px] leading-[15px] text-[#222]">
          <div className="w-[189px] border-t border-r border-l border-[#b0b0b0] pl-[3px]">USB Осциллограф не подключен</div>
          <div className="w-[1441px] border-t border-r border-l border-[#b0b0b0]" />
          <div className="w-[47px] border-t border-l border-[#b0b0b0] pl-[2px]">1.4</div>
        </div>
      </div>
    </div>
  );
}
